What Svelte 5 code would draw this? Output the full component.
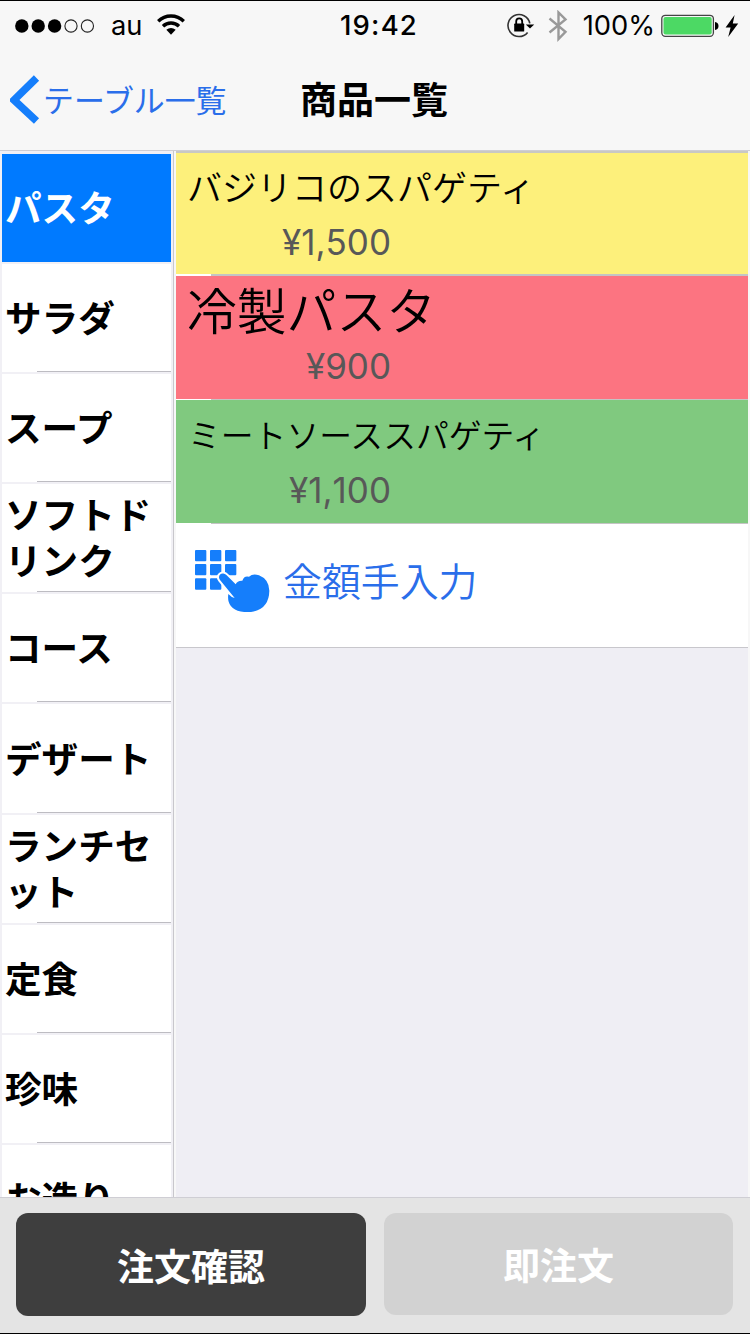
<script>
  let selected = $state(0);

  const categories = [
    "パスタ",
    "サラダ",
    "スープ",
    "ソフトドリンク",
    "コース",
    "デザート",
    "ランチセット",
    "定食",
    "珍味",
    "お造り",
  ];

  const products = [
    { name: "バジリコのスパゲティ", price: 1500, kind: "yellow" },
    { name: "冷製パスタ", price: 900, kind: "red" },
    { name: "ミートソーススパゲティ", price: 1100, kind: "green" },
  ];

  const yen = (n) => "¥" + n.toLocaleString("en-US");
</script>

<div class="screen">
  <div class="status">
    <div class="left">
      <svg class="signal" width="80" height="14" viewBox="0 0 80 14">
        <circle cx="6.8" cy="7" r="6.7" />
        <circle cx="23.2" cy="7" r="6.7" />
        <circle cx="39.6" cy="7" r="6.7" />
        <circle class="off" cx="56" cy="7" r="6.1" />
        <circle class="off" cx="72.4" cy="7" r="6.1" />
      </svg>
      <span class="carrier">au</span>
      <svg class="wifi" width="30" height="22" viewBox="0 0 30 22">
        <path class="arc" d="M2.2 7.2 A18.5 18.5 0 0 1 27.8 7.2" />
        <path class="arc" d="M7 12.2 A11.5 11.5 0 0 1 23 12.2" />
        <path d="M10.3 15.7 Q15 12.3 19.7 15.7 L15 20.8 Z" />
      </svg>
    </div>
    <span class="time">19:42</span>
    <div class="right">
      <svg class="lock" width="28" height="26" viewBox="0 0 28 26">
        <path class="ring" d="M22.8 10.4 A11 11 0 1 0 20.6 19.4" />
        <path d="M18.8 11.4 H27.2 L23 15.6 Z" />
        <rect x="7.2" y="10.6" width="10" height="8" rx="0.6" />
        <path class="shackle" d="M9.2 11 V8.6 A3 3.2 0 0 1 15.2 8.6 V11" />
      </svg>
      <svg class="bluetooth" width="20" height="32" viewBox="0 0 20 32">
        <path d="M1.5 8.5 L17.5 21.8 L10.5 29 V2.5 L17.5 9.5 L1.5 22.5" />
      </svg>
      <span class="percent">100%</span>
      <svg class="battery" width="58" height="24" viewBox="0 0 58 24">
        <rect class="shell" x="0.8" y="1.3" width="51.6" height="21" rx="3.5" />
        <rect class="charge" x="2.5" y="3" width="48.2" height="17.6" rx="2" />
        <path d="M54 8 Q57.5 8.6 57.5 12 Q57.5 15.4 54 16 Z" />
      </svg>
      <svg class="bolt" width="14" height="24" viewBox="0 0 14 24">
        <path d="M9.6 1 L0.6 13.4 H5.6 L3.2 23 L13.2 9.6 H7.8 Z" />
      </svg>
    </div>
  </div>

  <nav>
    <button class="back">
      <svg width="30" height="50" viewBox="0 0 30 50">
        <path d="M26.5 3 L4 25 L26.5 46" />
      </svg>
      <span>テーブル一覧</span>
    </button>
    <h1>商品一覧</h1>
  </nav>

  <main>
    <ul class="categories">
      {#each categories as category, i}
        <li>
          <button class="category" class:selected={selected === i} onclick={() => (selected = i)}>
            <span>{category}</span>
          </button>
        </li>
      {/each}
    </ul>

    <div class="products">
      {#each products as p}
        <div class="product {p.kind}">
          <div class="name">{p.name}</div>
          <div class="price">{yen(p.price)}</div>
        </div>
      {/each}
      <button class="manual">
        <svg width="76" height="64" viewBox="0 0 228 192">
          {#each [0, 45, 90] as x}
            {#each [0, 42, 85] as y}
              {#if !(x === 90 && y === 85)}
                <rect {x} {y} width="34" height="34" rx="3" />
              {/if}
            {/each}
          {/each}
          <path
            class="hand"
            d="M75 90 C67 80 76 68 87 71 Q91 72 95 76 L122 103 Q127 91 142 92 Q147 76 162 80 Q174 69 192 76 Q222 88 223 122 Q222 178 168 186 Q111 189 101 155 Q98 145 100 132 Q108 141 119 144 Z"
          />
        </svg>
        <span>金額手入力</span>
      </button>
    </div>
  </main>

  <footer>
    <button class="confirm">注文確認</button>
    <button class="instant" disabled>即注文</button>
  </footer>
</div>

<style>
  :global(body) {
    margin: 0;
    background: #f7f7f7;
  }
  .screen {
    box-sizing: border-box;
    width: 750px;
    height: 1334px;
    display: flex;
    flex-direction: column;
    overflow: hidden;
    border-top: 1px solid #000;
    border-bottom: 1px solid #000;
    background: #f7f7f7;
    font-family: Inter, "Noto Sans CJK JP", sans-serif;
    color: #000;
  }
  button {
    margin: 0;
    padding: 0;
    border: 0;
    background: none;
    font: inherit;
    color: inherit;
    text-align: left;
  }
  svg {
    display: block;
    flex: none;
  }

  /* status bar */
  .status {
    height: 49px;
    display: grid;
    grid-template-columns: 1fr auto 1fr;
    align-items: center;
    padding: 0 11px 0 15px;
    font-size: 27.3px;
    line-height: 49px;
  }
  .left,
  .right {
    display: flex;
    align-items: center;
  }
  .right {
    justify-content: flex-end;
  }
  .signal .off {
    fill: none;
    stroke: #222;
    stroke-width: 1.1;
  }
  .carrier {
    margin-left: 16px;
  }
  .wifi {
    margin: 0 0 1px 14px;
  }
  .arc {
    fill: none;
    stroke: #000;
    stroke-width: 3.4;
  }
  .time {
    padding-left: 4px;
    font-size: 27.5px;
    font-weight: 500;
    letter-spacing: 1.2px;
  }
  .ring {
    fill: none;
    stroke: #333;
    stroke-width: 1.6;
  }
  .shackle {
    fill: none;
    stroke: #000;
    stroke-width: 1.8;
  }
  .bluetooth {
    margin-left: 13px;
  }
  .bluetooth path {
    fill: none;
    stroke: #999;
    stroke-width: 2.4;
  }
  .percent {
    margin-left: 15px;
  }
  .battery {
    margin-left: 6px;
  }
  .shell {
    fill: #f7f7f7;
    stroke: #444;
    stroke-width: 1.3;
  }
  .charge {
    fill: #4cd964;
  }
  .bolt {
    margin-left: 6px;
  }

  /* navigation bar */
  nav {
    height: 100px;
    display: grid;
    grid-template-columns: 300px 1fr;
    align-items: center;
  }
  .back {
    display: flex;
    align-items: center;
    gap: 3px;
    padding-left: 10px;
    font-size: 30.9px;
    line-height: 50px;
    color: #2a6eea;
    white-space: nowrap;
  }
  .back span {
    padding-top: 2px;
  }
  .back path {
    fill: none;
    stroke: #157efb;
    stroke-width: 7.5;
  }
  h1 {
    margin: 0;
    padding-top: 2px;
    font-size: 37px;
    line-height: 50px;
    font-weight: 700;
  }

  main {
    flex: 1;
    min-height: 0;
    display: flex;
    border-top: 1px solid #cfced4;
    overflow: hidden;
  }

  /* category column */
  .categories {
    box-sizing: border-box;
    width: 174px;
    margin: 0;
    padding: 3px 2px 0;
    list-style: none;
    background: #f1f0f5;
    border-right: 1px solid #c8c7cc;
  }
  .category {
    position: relative;
    display: flex;
    align-items: center;
    width: 169px;
    height: 108.1px;
    margin-bottom: 2px;
    padding: 2px 0 0 3px;
    box-sizing: border-box;
    background: #fff;
    font-size: 36.6px;
    line-height: 46px;
    font-weight: 700;
    word-break: break-all;
  }
  .category::after {
    content: "";
    position: absolute;
    left: 35px;
    right: 0;
    bottom: 0;
    height: 1px;
    background: #bdbcc2;
  }
  .category.selected {
    background: #007aff;
    color: #fff;
  }
  .category.selected::after {
    display: none;
  }

  /* product list */
  .products {
    flex: 1;
    margin: 0 2px;
    background: #efeef4;
    border-top: 2px solid #c9c8c4;
  }
  .product {
    position: relative;
    box-sizing: border-box;
    height: 124px;
    border-bottom: 1px solid #fff;
  }
  .product::after {
    content: "";
    position: absolute;
    left: 35px;
    right: 0;
    bottom: -1px;
    height: 1px;
    background: #c4c4c4;
  }
  .name {
    height: 68px;
    padding-left: 11px;
    font-size: 35px;
    line-height: 71px;
    font-weight: 350;
    white-space: nowrap;
  }
  .price {
    width: 215px;
    font-size: 35px;
    line-height: 43px;
    color: #585858;
    text-align: right;
    font-kerning: none;
  }
  .yellow {
    height: 123px;
    border-bottom-width: 2px;
    background: #fdf07b;
  }
  .yellow::after {
    bottom: -2px;
    height: 2px;
  }
  .red {
    background: #fc7481;
  }
  .red .name {
    font-size: 49.8px;
    line-height: 73px;
  }
  .red .price,
  .green .price {
    line-height: 44px;
  }
  .green {
    background: #80c97f;
  }
  .green .name {
    padding-left: 12px;
    font-size: 32.8px;
    line-height: 72px;
  }
  .manual {
    box-sizing: border-box;
    width: 100%;
    height: 124px;
    display: flex;
    align-items: center;
    gap: 13px;
    padding: 0 0 8px 19px;
    background: #fff;
    border-bottom: 1px solid #c8c7cc;
    font-size: 38.9px;
    line-height: 58px;
    font-weight: 350;
    color: #2a6eea;
  }
  .manual svg {
    overflow: visible;
    fill: #157efb;
  }
  .manual span {
    margin-left: -1px;
  }
  .hand {
    stroke: #fff;
    stroke-width: 12;
    paint-order: stroke;
  }

  /* bottom actions */
  footer {
    box-sizing: border-box;
    height: 136px;
    display: flex;
    gap: 18px;
    padding: 15px 17px 18px 16px;
    background: #e4e4e4;
    border-top: 1px solid #cfced4;
  }
  footer button {
    height: 103px;
    border-radius: 12px;
    font-size: 37px;
    font-weight: 700;
    color: #fff;
    text-align: center;
  }
  .confirm {
    width: 350px;
    background: #3e3e3e;
  }
  footer .instant {
    width: 349px;
    height: 102px;
    background: #d2d2d2;
  }
</style>
